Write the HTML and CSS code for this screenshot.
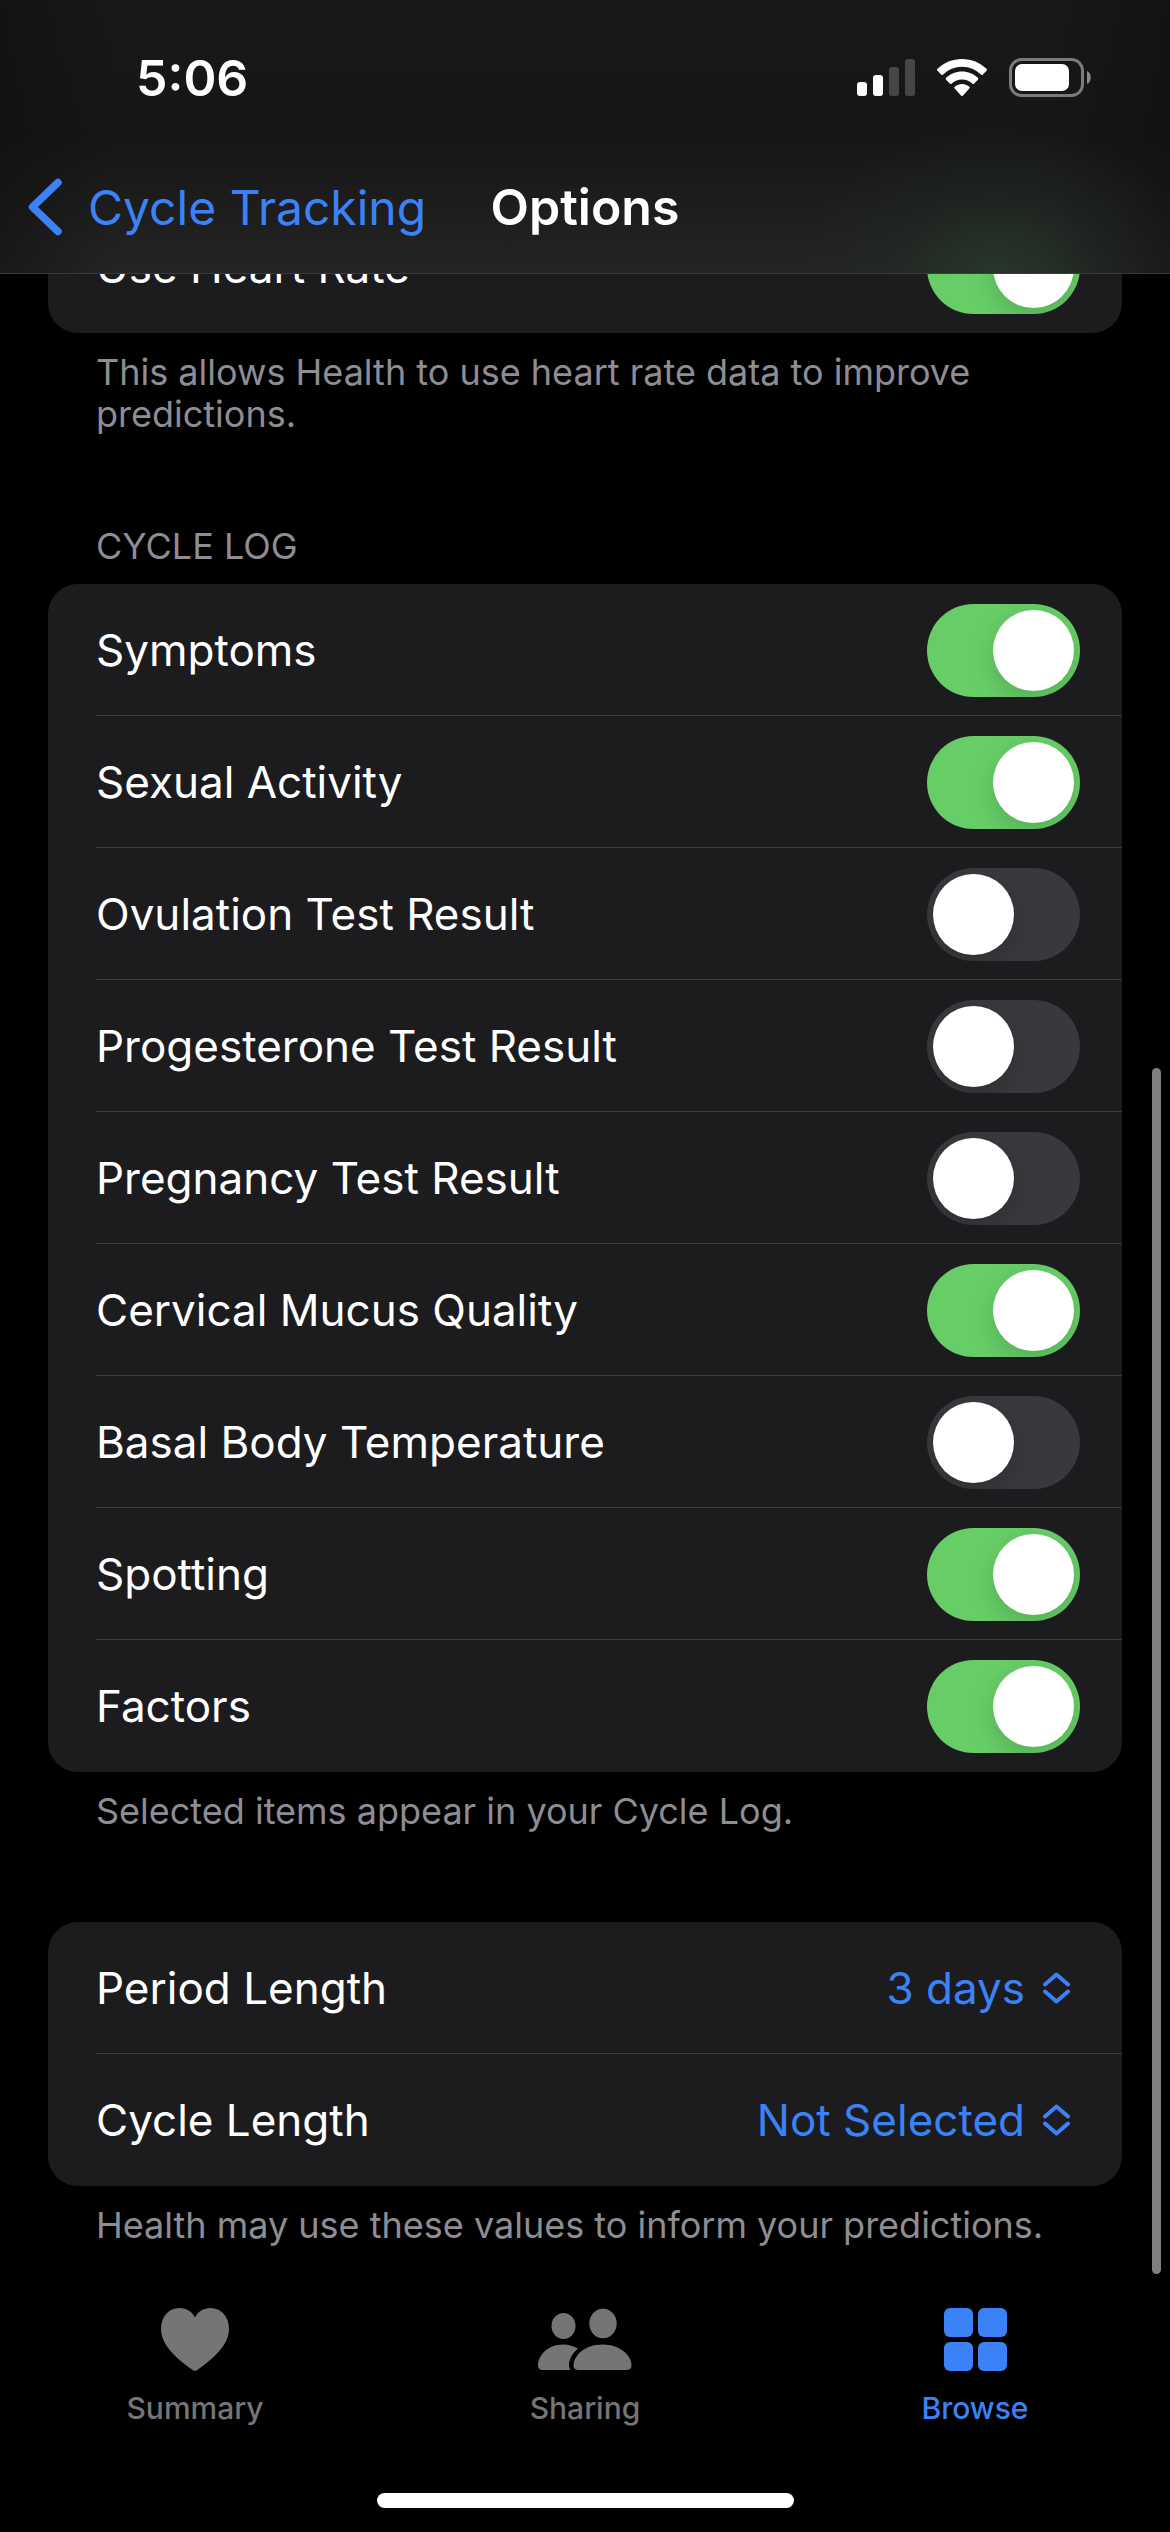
FILE: index.html
```html
<!DOCTYPE html>
<html lang="en">
<head>
<meta charset="utf-8">
<meta name="viewport" content="width=device-width, initial-scale=1">
<title>Options</title>
<link rel="stylesheet" href="styles.css">
</head>
<body>
<header class="topbar">
  <div class="status">
    <time class="clock">5:06</time>
    <div class="indicators">
      <svg class="signal" width="58" height="38" viewBox="0 0 58 38" role="img" aria-label="Signal: 2 of 4 bars">
        <rect x="0" y="23" width="10" height="14" rx="3" fill="#fff"/>
        <rect x="16" y="16" width="10" height="21" rx="3" fill="#fff"/>
        <rect x="32" y="8" width="10" height="29" rx="3" fill="#464646"/>
        <rect x="48" y="0" width="10" height="37" rx="3" fill="#464646"/>
      </svg>
      <svg class="wifi" width="50" height="38" viewBox="0 0 50 38" role="img" aria-label="Wi-Fi">
        <g fill="#fff">
          <path d="M25 0C34.500 0 43.100 3.700 49.500 9.800a1.400 1.400 0 0 1 0 2L45.900 15.400a1.400 1.400 0 0 1-2 0A27 27 0 0 0 6.100 15.400a1.400 1.400 0 0 1-2 0L.500 11.800a1.400 1.400 0 0 1 0-2C6.900 3.700 15.500 0 25 0Z"/>
          <path d="M25 12.500c6.200 0 11.700 2.400 15.900 6.300a1.400 1.400 0 0 1 0 2l-3.700 3.700a1.400 1.400 0 0 1-2 0 15 15 0 0 0-20.400 0 1.400 1.400 0 0 1-2 0L9.100 20.800a1.400 1.400 0 0 1 0-2c4.200-3.900 9.700-6.300 15.900-6.300Z"/>
          <path d="M25 25c2.700 0 5.100 1 7.100 2.600a1.400 1.400 0 0 1 0 2.200l-6.100 6.700a1.400 1.400 0 0 1-2 0l-6.100-6.700a1.400 1.400 0 0 1 0-2.200C19.900 26 22.300 25 25 25Z"/>
        </g>
      </svg>
      <svg class="battery" width="82" height="40" viewBox="0 0 82 40" role="img" aria-label="Battery">
        <rect x="1.500" y="1.500" width="72" height="36" rx="11" fill="none" stroke="#7b7b7b" stroke-width="3"/>
        <rect x="6" y="6" width="54" height="27" rx="7" fill="#fff"/>
        <path d="M78 13c5 2 5 11 0 13Z" fill="#8a8a8a"/>
      </svg>
    </div>
  </div>
  <nav class="navbar">
    <a class="back" href="#cycle-tracking">
      <svg width="34" height="58" viewBox="0 0 34 58" aria-hidden="true"><path d="M30 4.500 4.500 29 30 53.500" fill="none" stroke="#3c82f7" stroke-width="7.500" stroke-linecap="round" stroke-linejoin="round"/></svg>
      <span>Cycle Tracking</span>
    </a>
    <h1 class="title">Options</h1>
  </nav>
</header>

<main class="content">
  <section class="group">
    <div class="card">
      <label class="row"><span>Use Heart Rate</span><input class="switch" type="checkbox" role="switch" checked></label>
    </div>
    <p class="note">This allows Health to use heart rate data to improve predictions.</p>
  </section>

  <section class="group">
    <h2 class="heading">CYCLE LOG</h2>
    <div class="card">
      <label class="row"><span>Symptoms</span><input class="switch" type="checkbox" role="switch" checked></label>
      <label class="row"><span>Sexual Activity</span><input class="switch" type="checkbox" role="switch" checked></label>
      <label class="row"><span>Ovulation Test Result</span><input class="switch" type="checkbox" role="switch"></label>
      <label class="row"><span>Progesterone Test Result</span><input class="switch" type="checkbox" role="switch"></label>
      <label class="row"><span>Pregnancy Test Result</span><input class="switch" type="checkbox" role="switch"></label>
      <label class="row"><span>Cervical Mucus Quality</span><input class="switch" type="checkbox" role="switch" checked></label>
      <label class="row"><span>Basal Body Temperature</span><input class="switch" type="checkbox" role="switch"></label>
      <label class="row"><span>Spotting</span><input class="switch" type="checkbox" role="switch" checked></label>
      <label class="row"><span>Factors</span><input class="switch" type="checkbox" role="switch" checked></label>
    </div>
    <p class="note">Selected items appear in your Cycle Log.</p>
  </section>

  <section class="group">
    <div class="card">
      <div class="row row-picker">
        <label for="period">Period Length</label>
        <select class="picker" id="period"><option>3 days</option></select>
        <svg width="27" height="32" viewBox="0 0 27 32" aria-hidden="true"><path d="M2 12.500 13.500 2.500 25 12.500M2 19.500 13.500 29.500 25 19.500" fill="none" stroke="#3c82f7" stroke-width="4" stroke-linecap="round" stroke-linejoin="round"/></svg>
      </div>
      <div class="row row-picker">
        <label for="cycle">Cycle Length</label>
        <select class="picker" id="cycle"><option>Not Selected</option></select>
        <svg width="27" height="32" viewBox="0 0 27 32" aria-hidden="true"><path d="M2 12.500 13.500 2.500 25 12.500M2 19.500 13.500 29.500 25 19.500" fill="none" stroke="#3c82f7" stroke-width="4" stroke-linecap="round" stroke-linejoin="round"/></svg>
      </div>
    </div>
    <p class="note">Health may use these values to inform your predictions.</p>
  </section>
</main>

<div class="scroll-thumb"></div>

<footer class="tabbar">
  <nav class="tabs">
    <a class="tab" href="#summary">
      <svg width="68" height="64" viewBox="0 0 68 64" aria-hidden="true"><path d="M34 63c-1 0-2-.600-3-1.400C12 48 0 35 0 21 0 8.500 8 0 18.500 0 25.500 0 31 3.500 34 9.500 37 3.500 42.500 0 49.500 0 60 0 68 8.500 68 21c0 14-12 27-31 40.600-1 .800-2 1.400-3 1.400Z" fill="currentColor"/></svg>
      <span>Summary</span>
    </a>
    <a class="tab" href="#sharing">
      <svg width="94" height="64" viewBox="0 0 94 64" aria-hidden="true">
        <g fill="currentColor">
          <ellipse cx="25.500" cy="18" rx="12" ry="13"/>
          <ellipse cx="65" cy="15.500" rx="13.700" ry="14.800"/>
          <path d="M32.500 62H5c-3.300 0-5-1.500-5-4.500C0 48 9 36.500 25 36.500c6 0 11 1.600 15 4.300C33.500 46 31 52.500 31 57c0 2 .500 3.800 1.500 5Z"/>
          <path d="M41 62c-3.600 0-5.500-1.500-5.500-4.500 0-9.500 10.500-21 29-21s29 11.500 29 21c0 3-1.900 4.500-5.500 4.500Z"/>
        </g>
      </svg>
      <span>Sharing</span>
    </a>
    <a class="tab tab-active" href="#browse" aria-current="page">
      <svg width="63" height="64" viewBox="0 0 63 64" aria-hidden="true"><g fill="currentColor"><rect width="29" height="29" rx="6"/><rect x="34" width="29" height="29" rx="6"/><rect y="34" width="29" height="29" rx="6"/><rect x="34" y="34" width="29" height="29" rx="6"/></g></svg>
      <span>Browse</span>
    </a>
  </nav>
  <div class="home-indicator"></div>
</footer>
</body>
</html>
```

FILE: styles.css
```css
* { box-sizing: border-box; }

body {
  margin: 0;
  background: #000;
  color: #fff;
  font-family: Inter, "Liberation Sans", sans-serif;
  font-size: 44px;
}

a { color: inherit; text-decoration: none; }
svg { display: block; flex: none; }

/* Status bar and navigation bar, floating over the scrolled list */
.topbar {
  position: fixed;
  z-index: 2;
  top: 0;
  left: 0;
  right: 0;
  border-bottom: 1px solid #3a3a3c;
  background:
    radial-gradient(ellipse 190px 150px at 85% 100%, rgba(42, 66, 48, 0.6), rgba(34, 52, 38, 0.3) 50%, transparent),
    linear-gradient(90deg, rgba(14, 14, 14, 0.5), transparent 10%, transparent 90%, rgba(14, 14, 14, 0.5)),
    linear-gradient(#181818, #161616 50%, #242424);
}

.status {
  display: flex;
  align-items: center;
  justify-content: space-between;
  height: 141px;
  padding: 15px 79px 0 136px;
}

.clock { font-size: 50px; font-weight: 600; }

.indicators { display: flex; align-items: center; gap: 22px; }

.navbar {
  display: grid;
  grid-template-columns: 1fr auto 1fr;
  align-items: center;
  height: 132px;
  padding: 0 28px;
  font-size: 48px;
}

.back { display: flex; align-items: center; gap: 26px; color: #3c82f7; white-space: nowrap; }

.title { margin: 0; font-size: 50px; font-weight: 600; }

/* Grouped list */
.content {
  display: flex;
  flex-direction: column;
  gap: 90px;
  padding: 201px 48px 249px;
}

.card { overflow: hidden; border-radius: 30px; background: #1c1c1e; }

.row {
  display: flex;
  align-items: center;
  justify-content: space-between;
  gap: 18px;
  height: 132px;
  margin-left: 48px;
  padding: 1px 42px 0 0;
  border-bottom: 1px solid #3d3d40;
}

.row:last-child { border-color: transparent; }

.row-picker { padding-right: 52px; }

.heading,
.note {
  margin: 0;
  padding: 0 48px;
  color: #8d8d93;
  font-size: 36px;
  font-weight: 400;
  line-height: 42px;
}

.heading { padding-bottom: 17px; }
.note { padding-top: 18px; }

.switch {
  appearance: none;
  flex: none;
  display: flex;
  width: 153px;
  height: 93px;
  margin: 0;
  padding: 6px;
  overflow: hidden;
  border-radius: 47px;
  background: #39393d;
}

.switch::before {
  content: "";
  width: 81px;
  height: 81px;
  border-radius: 50%;
  background: #fff;
  box-shadow: 0 9px 24px rgba(0, 0, 0, 0.16);
}

.switch:checked { justify-content: flex-end; background: #67ce67; }

.picker {
  appearance: none;
  flex: 1;
  margin: 0;
  padding: 0;
  border: 0;
  background: none;
  color: #3c82f7;
  font: inherit;
  text-align: right;
  text-align-last: right;
}

.scroll-thumb {
  position: fixed;
  z-index: 1;
  top: 1068px;
  right: 9px;
  bottom: 258px;
  width: 9px;
  border-radius: 5px;
  background: #808080;
}

/* Tab bar */
.tabbar {
  position: fixed;
  left: 0;
  right: 0;
  bottom: 0;
  display: flex;
  flex-direction: column;
  align-items: center;
  justify-content: space-between;
  height: 249px;
  padding: 25px 0 24px;
  background: #000;
}

.tabs { display: grid; grid-template-columns: repeat(3, 1fr); width: 100%; }

.tab {
  display: flex;
  flex-direction: column;
  align-items: center;
  gap: 18px;
  color: #757575;
  font-size: 30px;
  font-weight: 500;
  line-height: 36px;
}

.tab-active { color: #3c82f7; }

.home-indicator { width: 417px; height: 15px; border-radius: 8px; background: #fff; }
```
